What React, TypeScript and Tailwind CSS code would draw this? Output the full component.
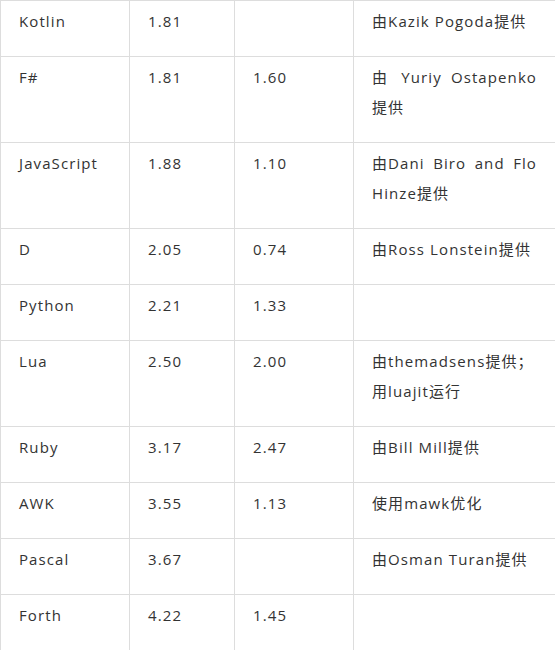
import type { ReactNode } from 'react'

const rows: [string, string, string, ReactNode][] = [
  ['Kotlin', '1.81', '', '由Kazik Pogoda提供'],
  ['F#', '1.81', '1.60', '由 Yuriy Ostapenko提供'],
  ['JavaScript', '1.88', '1.10', <><span className="inline-block">由Dani</span> Biro and Flo Hinze提供</>],
  ['D', '2.05', '0.74', '由Ross Lonstein提供'],
  ['Python', '2.21', '1.33', ''],
  ['Lua', '2.50', '2.00', <><span className="inline-block">由themadsens提供；</span>用luajit运行</>],
  ['Ruby', '3.17', '2.47', '由Bill Mill提供'],
  ['AWK', '3.55', '1.13', '使用mawk优化'],
  ['Pascal', '3.67', '', '由Osman Turan提供'],
  ['Forth', '4.22', '1.45', ''],
]

const cell = 'border border-[#dddddd] pl-[18px] pr-[18px] pt-[5px] pb-[20px] align-top text-justify'

export default function App() {
  return (
    <div className="bg-white w-[555px] h-[650px] overflow-hidden">
      <table
        className="w-[555px] border-collapse table-fixed text-[15px] leading-[30px] tracking-[1.1px] text-[#333333]"
        style={{ fontFamily: '"Open Sans", "Noto Sans CJK SC", sans-serif' }}
      >
        <colgroup>
          <col className="w-[129px]" />
          <col className="w-[105px]" />
          <col className="w-[119px]" />
          <col className="w-[202px]" />
        </colgroup>
        <tbody>
          {rows.map((r, i) => (
            <tr key={i}>
              {r.map((c, j) => (
                <td key={j} className={cell}>{c}</td>
              ))}
            </tr>
          ))}
        </tbody>
      </table>
    </div>
  )
}
